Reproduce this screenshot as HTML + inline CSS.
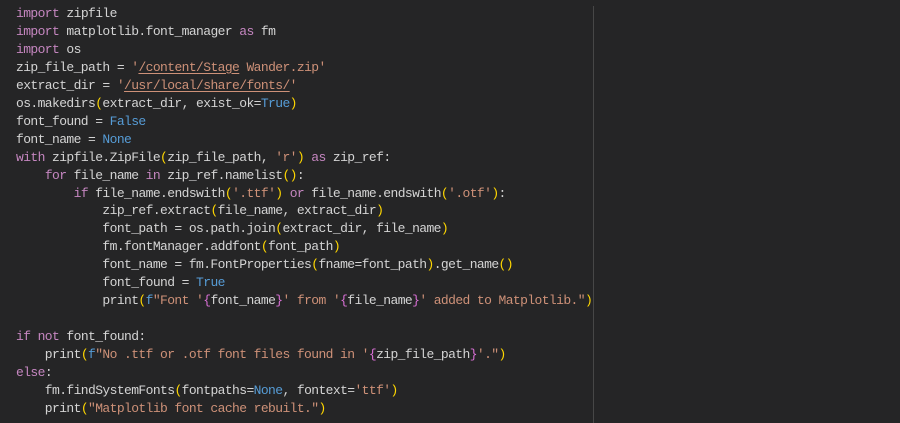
<!DOCTYPE html>
<html><head><style>
html,body{margin:0;padding:0;background:#252526;width:900px;height:423px;overflow:hidden}
pre{margin:0;position:absolute;left:16px;top:5px;font-family:"Liberation Mono",monospace;font-size:13px;line-height:17.95px;color:#d4d4d4;letter-spacing:-0.6px}
.k{color:#c586c0}.s{color:#ce9178}.b{color:#569cd6}.y{color:#ffd700}.p{color:#da70d6}.u{text-decoration:underline;text-underline-offset:2px}
.vl{position:absolute;left:593px;top:6px;width:1px;height:417px;background:#474747}
</style></head><body>
<div class="vl"></div>
<pre><span class="k">import</span> zipfile
<span class="k">import</span> matplotlib.font_manager <span class="k">as</span> fm
<span class="k">import</span> os
zip_file_path = <span class="s">'<span class="u">/content/Stage</span> Wander.zip'</span>
extract_dir = <span class="s">'<span class="u">/usr/local/share/fonts/</span>'</span>
os.makedirs<span class="y">(</span>extract_dir, exist_ok=<span class="b">True</span><span class="y">)</span>
font_found = <span class="b">False</span>
font_name = <span class="b">None</span>
<span class="k">with</span> zipfile.ZipFile<span class="y">(</span>zip_file_path, <span class="s">'r'</span><span class="y">)</span> <span class="k">as</span> zip_ref:
    <span class="k">for</span> file_name <span class="k">in</span> zip_ref.namelist<span class="y">()</span>:
        <span class="k">if</span> file_name.endswith<span class="y">(</span><span class="s">'.ttf'</span><span class="y">)</span> <span class="k">or</span> file_name.endswith<span class="y">(</span><span class="s">'.otf'</span><span class="y">)</span>:
            zip_ref.extract<span class="y">(</span>file_name, extract_dir<span class="y">)</span>
            font_path = os.path.join<span class="y">(</span>extract_dir, file_name<span class="y">)</span>
            fm.fontManager.addfont<span class="y">(</span>font_path<span class="y">)</span>
            font_name = fm.FontProperties<span class="y">(</span>fname=font_path<span class="y">)</span>.get_name<span class="y">()</span>
            font_found = <span class="b">True</span>
            print<span class="y">(</span><span class="b">f</span><span class="s">"Font '</span><span class="p">{</span>font_name<span class="p">}</span><span class="s">' from '</span><span class="p">{</span>file_name<span class="p">}</span><span class="s">' added to Matplotlib."</span><span class="y">)</span>

<span class="k">if</span> <span class="k">not</span> font_found:
    print<span class="y">(</span><span class="b">f</span><span class="s">"No .ttf or .otf font files found in '</span><span class="p">{</span>zip_file_path<span class="p">}</span><span class="s">'."</span><span class="y">)</span>
<span class="k">else</span>:
    fm.findSystemFonts<span class="y">(</span>fontpaths=<span class="b">None</span>, fontext=<span class="s">'ttf'</span><span class="y">)</span>
    print<span class="y">(</span><span class="s">"Matplotlib font cache rebuilt."</span><span class="y">)</span></pre>
</body></html>
